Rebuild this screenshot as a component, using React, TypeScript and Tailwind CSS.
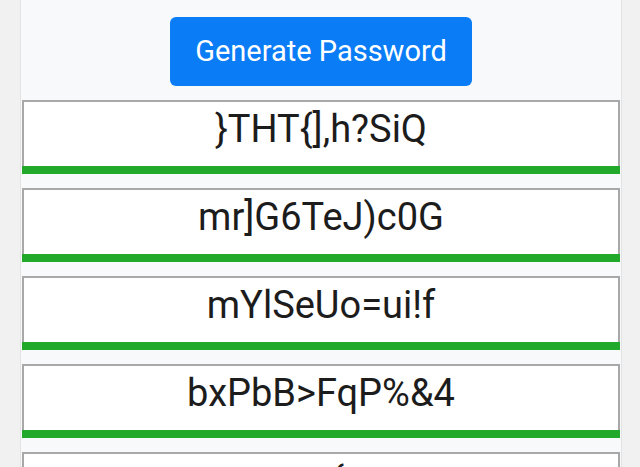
import React from "react";

const passwords = ["}THT{],h?SiQ", "mr]G6TeJ)c0G", "mYlSeUo=ui!f", "bxPbB>FqP%&4", "ravmwe{zcoxu"];

export default function App() {
  return (
    <div className="w-full h-[467px] overflow-hidden bg-[#f1f1f1]" style={{ fontFamily: "Roboto, 'Liberation Sans', sans-serif" }}>
      <div className="ml-[20px] w-[602px] h-full bg-[#f8f9fa] border-x border-[#e3e3e3] px-px pt-[17px] flex flex-col gap-[14px]">
        <div className="flex justify-center">
          <button className="w-[302px] h-[69px] rounded-[6px] bg-[#0a7cf6] text-white text-[29px] leading-none">
            Generate Password
          </button>
        </div>
        {passwords.map((p) => (
          <div key={p} className="flex flex-col shrink-0">
            <div className="bg-white border-t-2 border-x-2 border-[#a8a8a8] h-[66px] flex items-start justify-center pt-[5px]">
              <span className="text-[38px] text-[#1c1c1c] leading-[44px]">{p}</span>
            </div>
            <div className="h-[8px] bg-[#22a82b]" />
          </div>
        ))}
      </div>
    </div>
  );
}
